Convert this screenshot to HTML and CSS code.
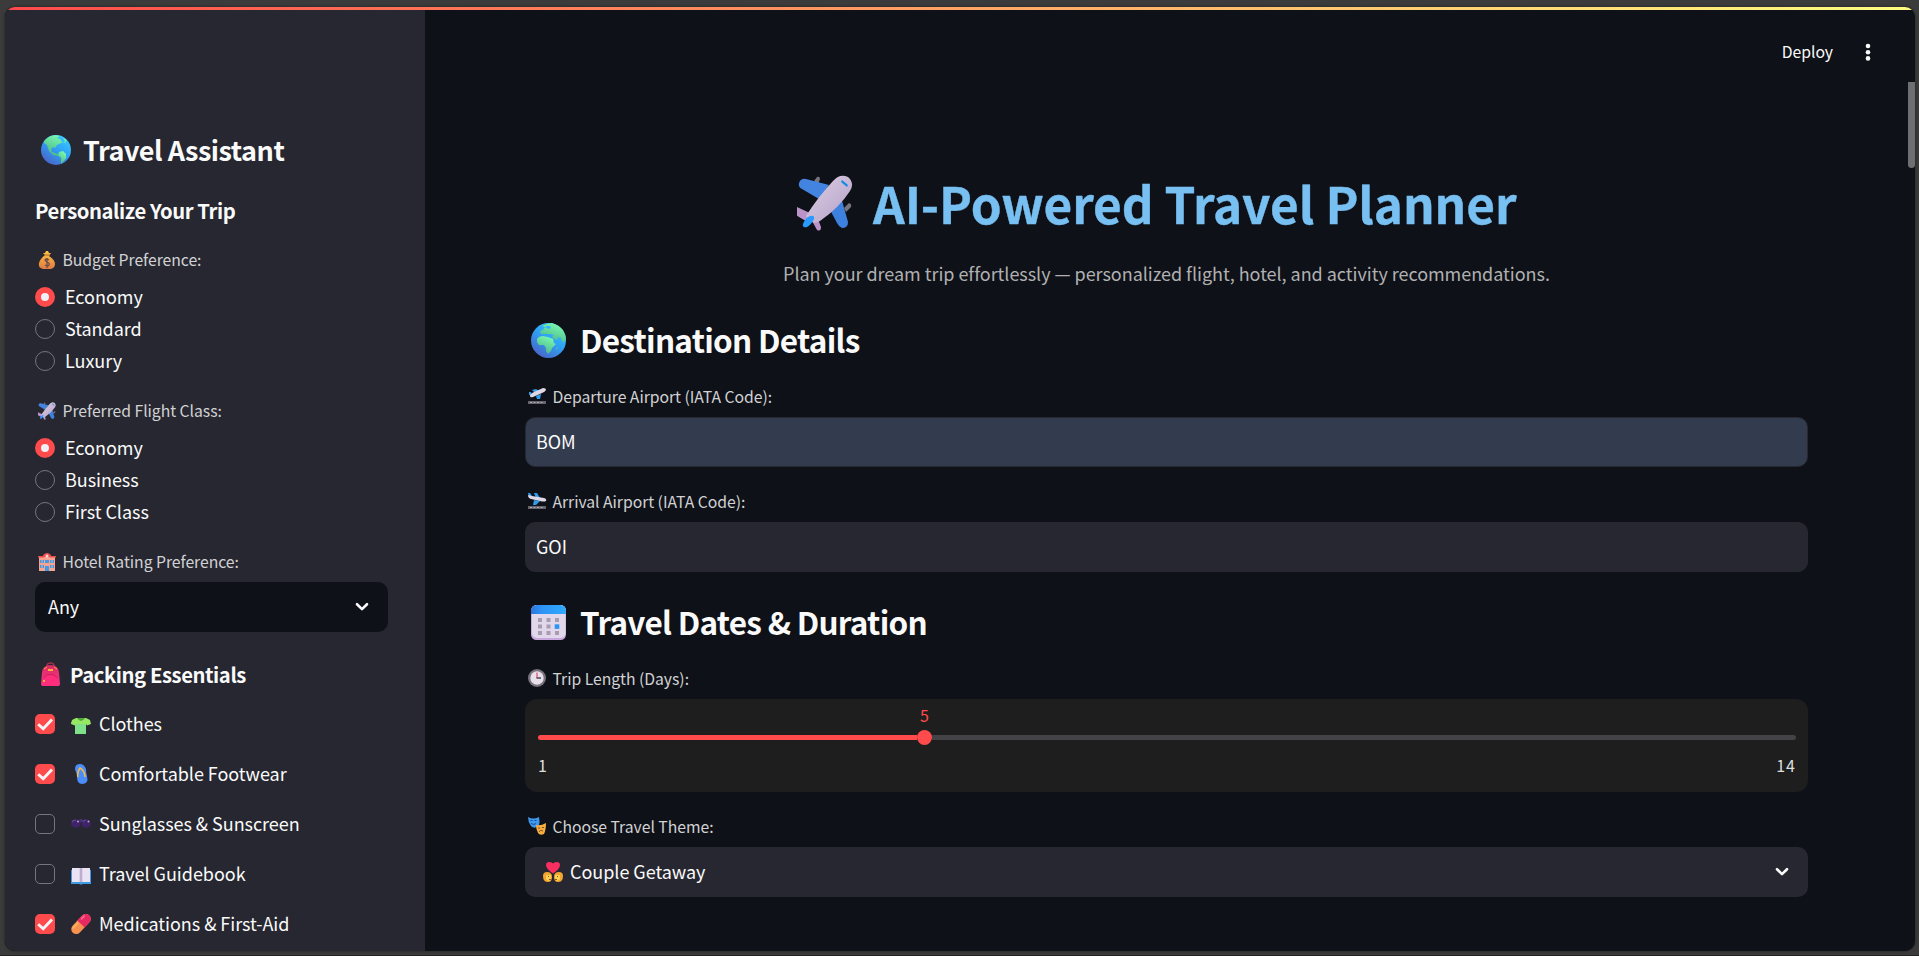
FILE: index.html
```html
<!DOCTYPE html>
<html lang="en">
<head>
<meta charset="utf-8">
<title>Travel Planner</title>
<link rel="stylesheet" href="styles.css">
</head>
<body>
<svg class="defs" aria-hidden="true">
  <defs>
    <linearGradient id="sea" x1="0.8" y1="0.1" x2="0.2" y2="0.95"><stop offset="0" stop-color="#38c4ff"/><stop offset="0.45" stop-color="#30a0f4"/><stop offset="1" stop-color="#4964c8"/></linearGradient>
    <linearGradient id="land" x1="0.8" y1="0" x2="0.3" y2="1"><stop offset="0" stop-color="#7dffb4"/><stop offset="1" stop-color="#4bb386"/></linearGradient>
    <linearGradient id="body" x1="0" y1="0" x2="1" y2="1"><stop offset="0" stop-color="#dcd0e2"/><stop offset="1" stop-color="#b59fc9"/></linearGradient>
    <linearGradient id="gold" x1="0" y1="0" x2="0" y2="1"><stop offset="0" stop-color="#ffc640"/><stop offset="1" stop-color="#e07b45"/></linearGradient>
    <linearGradient id="calTop"><stop offset="0" stop-color="#2e74dd"/><stop offset="0.3" stop-color="#2e93f5"/><stop offset="1" stop-color="#30aaff"/></linearGradient>
    <linearGradient id="pink" x1="0" y1="0" x2="0" y2="1"><stop offset="0" stop-color="#d92e63"/><stop offset="1" stop-color="#ff3187"/></linearGradient>
    <symbol id="plane" viewBox="0 0 56 56">
      <path d="M17 6l3-4q3-1 3 2l-2 5zM47 33l5-5q3 1 2 4l-5 5z" fill="#77747c"/>
      <path d="M2 8Q4 3 9 4L32 10 22 24 5 14Q1 12 2 8z" fill="#4284df"/>
      <path d="M44 22l7 25q0 6-6 6-3-1-5-5L31 31z" fill="#3e80de"/>
      <path d="M15 39L0 32q-6 0-5 4 2 4 14 10zM14 44l6 11q4 2 4-3l-5-13z" fill="#b993c9"/>
      <path d="M9 41Q21 22 36 6 43-2 51 2q7 6 2 14Q42 33 23 46q-8 5-14-5z" fill="url(#body)"/>
      <path d="M6 49q2-6 7-8 5-1 4 3-3 6-7 8-5 1-4-3z" fill="#299aff"/>
      <path d="M45 5l6 5-1 2-6-5z" fill="#168be6"/>
    </symbol>
    <symbol id="check" viewBox="0 0 20 20"><path d="M3.2 10.2l5 4.6L17 5.5" fill="none" stroke="#f4f4f8" stroke-width="2.9"/></symbol>
    <symbol id="chevron" viewBox="0 0 14 10"><path d="M2 2.2l5 4.9 5-4.9" fill="none" stroke="#fafafa" stroke-width="2.6" stroke-linecap="round" stroke-linejoin="round"/></symbol>
  </defs>
</svg>

<div class="window">
  <aside class="sidebar">
    <h1 class="side-title">
      <svg class="i30" viewBox="0 0 30 30"><circle cx="15" cy="15" r="15" fill="url(#sea)"/><path d="M3 6Q8 0 15 0l4 1-3 2 3 1 2 3 4 1-3-5q3 1 4 3l-4 1-6 3-2 3-2-1-2 3 1 2 3 1 4 2-1 1-5-1-4-4-2-6-3-2z" fill="url(#land)"/><path d="M18 17l4-1 3 3 0 4-3 4-2 2 0-6-3-3z" fill="url(#land)"/></svg>
      <span>Travel Assistant</span>
    </h1>
    <h3 class="side-heading personalize">Personalize Your Trip</h3>

    <div class="label side-label">
      <svg class="i18" viewBox="0 0 18 18"><path d="M7 4L5 2l2 0 1-2 2 0 1 2 2 0-2 3q6 4 6 8 0 4-4 5H5q-5-1-4-6 1-4 6-8z" fill="url(#gold)"/><path d="M6 4h6" stroke="#b26a30" stroke-width="1"/><path d="M11 9q-3-2-4 0 0 1 2 2 3 1 2 3-1 2-4 0M9 7v10" stroke="#6b4a46" fill="none" stroke-width="1.3"/></svg>
      <span>Budget Preference:</span>
    </div>
    <div class="radio-row"><i class="radio on"></i><span>Economy</span></div>
    <div class="radio-row"><i class="radio"></i><span>Standard</span></div>
    <div class="radio-row"><i class="radio"></i><span>Luxury</span></div>

    <div class="label side-label next">
      <svg class="i18"><use href="#plane"/></svg>
      <span>Preferred Flight Class:</span>
    </div>
    <div class="radio-row"><i class="radio on"></i><span>Economy</span></div>
    <div class="radio-row"><i class="radio"></i><span>Business</span></div>
    <div class="radio-row"><i class="radio"></i><span>First Class</span></div>

    <div class="label side-label next">
      <svg class="i18" viewBox="0 0 18 18"><path d="M1 4h5V2q3-3 6 0v2h5v14H1z" fill="#f7a392"/><path d="M0 3h6v1.500H0zM12 3h6v1.500h-6zM5 2q4-4 8 0v2H5z" fill="#e84f4d"/><path d="M2 7h1.500v3H2zM4.500 7H6v3H4.500zM12 7h1.500v3H12zM14.500 7H16v3h-1.500zM2 12h1.500v3H2zM4.500 12H6v3H4.500zM12 12h1.500v3H12zM14.500 12H16v3h-1.500zM7 13h4v5H7zM7 7h4v3H7z" fill="#3f9be8"/><path d="M9 1.500v3M7.500 3h3" stroke="#fff"/></svg>
      <span>Hotel Rating Preference:</span>
    </div>
    <div class="select dark"><span>Any</span><svg class="chev"><use href="#chevron"/></svg></div>

    <h3 class="side-heading packing">
      <svg class="pack" viewBox="0 0 19 23"><path d="M6 3q0-3 3.500-3T13 3" fill="none" stroke="#9d3350" stroke-width="1.500"/><path d="M1 9Q2 2 9.500 2T18 9l1 12q0 2-2 2H2q-2 0-2-2z" fill="url(#pink)"/><path d="M3 20q-2-8 6.500-8T16 20v3H3z" fill="#ff2d7c"/><path d="M3 15q2-4 7-3.500 4 0 6 3.500" stroke="#c9205e" fill="none"/><path d="M7 6h5v2H7zM2 17h2v2H2z" fill="#ffb13d"/><path d="M3 6l3-2M16 6l-3-2" stroke="#ff9f3d"/></svg>
      <span>Packing Essentials</span>
    </h3>
    <div class="check-row"><i class="box on"><svg><use href="#check"/></svg></i>
      <svg class="i20" viewBox="0 0 20 20"><path d="M5 5h10v15H4V10H1L0 9l2-3z" fill="#80e08a"/><path d="M5 4h10l4 2 1 4-4 1.500L15 10H5l-1 1.500L0 10l1-4z" fill="#96e763"/><path d="M6 4h8q-4 6-8 0z" fill="#50a63b"/></svg><span>Clothes</span></div>
    <div class="check-row"><i class="box on"><svg><use href="#check"/></svg></i>
      <svg class="i20" viewBox="0 0 20 20"><path d="M4 5q0-5 5-5 4 0 6 5 0 4 1 7 2 8-5 8-5 0-5-7 0-3-1-5-1-2-1-3z" fill="#4a8dfb"/><path d="M7 13Q6 8 9 4q5 3 5 9" fill="none" stroke="#f5b944" stroke-width="1.600"/></svg><span>Comfortable Footwear</span></div>
    <div class="check-row"><i class="box"></i>
      <svg class="i20" viewBox="0 0 20 20"><path d="M8 6q2-2 4 0v2H8z" fill="#4a3474"/><ellipse cx="4.800" cy="9.500" rx="4.800" ry="4.300" fill="#3f2368"/><ellipse cx="15.200" cy="9.500" rx="4.800" ry="4.300" fill="#3f2368"/><path d="M1 8q1-2 4-2M12 8q1-2 3-2" stroke="#674a92" stroke-width="1.200" fill="none"/><circle cx="7" cy="7.500" r="1" fill="#b8a8cc"/><circle cx="17.500" cy="7.500" r="1" fill="#b8a8cc"/></svg><span>Sunglasses &amp; Sunscreen</span></div>
    <div class="check-row"><i class="box"></i>
      <svg class="i20" viewBox="0 0 20 20"><path d="M0 6h20v14h-8l-2 .800L8 20H0z" fill="#3c9ae2"/><path d="M1 4h18v14H1z" fill="#e9e3f3"/><path d="M8.500 4h3v14h-3z" fill="#cfc2df"/><path d="M10 4v15" stroke="#a28fbb" stroke-width=".8"/></svg><span>Travel Guidebook</span></div>
    <div class="check-row"><i class="box on"><svg><use href="#check"/></svg></i>
      <svg class="i20" viewBox="0 0 20 20"><g transform="rotate(-47 10 10)"><rect x="-2" y="5" width="24" height="10" rx="5" fill="#f79150"/><path d="M10 5h7a5 5 0 0 1 0 10h-7z" fill="#e72963"/><path d="M1 7h8" stroke="#ffb768" stroke-width="1.500"/><path d="M14 7h4" stroke="#ff719a" stroke-width="1.500" stroke-linecap="round"/></g></svg><span>Medications &amp; First-Aid</span></div>
  </aside>

  <main class="main">
    <header class="toolbar"><span>Deploy</span><svg class="dots" viewBox="0 0 6 18"><circle cx="3" cy="3" r="2.300"/><circle cx="3" cy="9.200" r="2.300"/><circle cx="3" cy="15.400" r="2.300"/></svg></header>

    <h1 class="title"><svg class="title-plane"><use href="#plane"/></svg><span>AI-Powered Travel Planner</span></h1>
    <p class="subtitle"><span>Plan your dream trip effortlessly — personalized flight, hotel, and activity recommendations.</span></p>

    <h2 class="section first">
      <svg class="i35" viewBox="0 0 35 35"><circle cx="17.500" cy="17.500" r="17.500" fill="url(#sea)"/><path d="M11 3Q16 0 21 0q7 2 11 7 3 5 3 9l-2 3-2 0-1-4-3-1-1 3-3-1-2-2 2-2-4-1-4 0-5 0-1-3 3-1 2-3 3 2 3-1-1-2-3 0-2 1z" fill="url(#land)"/><path d="M6 16q2-3 6-3l5 1 5 2 1 4 2 1-4 4-1 3-3 3-2-3 0-3-2-3-5 0-2-3z" fill="url(#land)"/><path d="M25 25l1.500-1-.500 3z" fill="#5cd0a0"/></svg>
      <span>Destination Details</span>
    </h2>
    <div class="label main-label after-heading">
      <svg class="i18" viewBox="0 0 18 18"><path d="M0 14h18v3H0z" fill="#67646e"/><path d="M2 15.500h14" stroke="#aaa7b0" stroke-dasharray="2 1.500"/><path d="M4 3l4-1 5 3-4 3zM8 9l5-2-1 5-3 0zM1 5h2l1 3-3 0z" fill="#2d9dee"/><path d="M2 9q0-2 4-4l9-4q3 0 3 2-1 2-4 3L5 10q-3 1-3-1z" fill="#ded7e5"/></svg>
      <span>Departure Airport (IATA Code):</span>
    </div>
    <div class="field focus">BOM</div>
    <div class="label main-label">
      <svg class="i18" viewBox="0 0 18 18"><path d="M0 14h18v3H0z" fill="#67646e"/><path d="M2 15.500h14" stroke="#aaa7b0" stroke-dasharray="2 1.500"/><path d="M6 1h3l3 5-4 0zM0 1h2l2 3-3 1zM6 8l6 1-4 4-3 0z" fill="#2d9dee"/><path d="M0 3l4 1 12 2q3 1 2 3-2 1-6 0L3 7Q0 6 0 3z" fill="#ded7e5"/></svg>
      <span>Arrival Airport (IATA Code):</span>
    </div>
    <div class="field">GOI</div>

    <h2 class="section">
      <svg class="i35" viewBox="0 0 35 35"><rect width="35" height="35" rx="5.500" fill="#c9a9dd"/><rect x="1" width="33.500" height="33" rx="5" fill="#e2d8ec"/><path d="M0 9V6q0-6 6-6h23q6 0 6 6v3z" fill="url(#calTop)"/><path d="M7 13h4v4H7zM15.500 13h4v4h-4zM24 13h4v4h-4zM7 19.500h4v4H7zM15.500 19.500h4v4h-4zM7 26h4v4H7zM15.500 26h4v4h-4zM24 26h4v4h-4z" fill="#a79cb0"/><path d="M23.700 19.300h4.600v4.600h-4.600z" fill="#2d96f2"/></svg>
      <span>Travel Dates &amp; Duration</span>
    </h2>
    <div class="label main-label after-heading">
      <svg class="i18" viewBox="0 0 18 18"><circle cx="9" cy="9" r="9" fill="#77727c"/><circle cx="9" cy="9" r="6.700" fill="#e7dfec"/><path d="M9 3.500V9" stroke="#e15a72" stroke-width="1.300"/><path d="M8.500 9H13" stroke="#4b4453" stroke-width="1.500"/></svg>
      <span>Trip Length (Days):</span>
    </div>
    <div class="slider">
      <div class="value-row"><span>5</span></div>
      <div class="track"><div class="fill"></div><div class="thumb"></div><div class="rest"></div></div>
      <div class="range"><span>1</span><span>14</span></div>
    </div>
    <div class="label main-label">
      <svg class="i18" viewBox="0 0 18 18"><path d="M0 0q5 3 11 0 1 5 0 8-4 5-8 1Q0 5 0 0z" fill="#3e99ed"/><path d="M2.500 3.500h2M6.500 3.500h2M3 6.500q3 2 5 0" stroke="#1c4b9b" fill="none"/><path d="M8 8q5 1 10-2 0 7-2 11-4 2-6-1-2-4-2-8z" fill="#f8ad40"/><path d="M10 11h2M14 10.500h2M11 15q1-3 4-1" stroke="#8d4d22" fill="none"/></svg>
      <span>Choose Travel Theme:</span>
    </div>
    <div class="select theme"><svg class="i20" viewBox="0 0 20 20"><path d="M0 14q0-4 4-4 5 0 5 5 0 5-4 5-5 0-5-6zM20 14q0-4-4-4-5 0-5 5 0 5 4 5 5 0 5-6z" fill="#f3a52f"/><path d="M3 13h5v5q-4 2-5-1zM17 13h-5v5q4 2 5-1z" fill="#ffcf50"/><path d="M5 14.500h1M14 14.500h1M6 17.500h2M12 17.500h2" stroke="#8a5526"/><path d="M10 11.500Q3 7 3 3q0-3 3.500-3Q9 0 10 1.500 11 0 13.500 0 17 0 17 3q0 4-7 8.500z" fill="#f92f60"/></svg><span>Couple Getaway</span><svg class="chev"><use href="#chevron"/></svg></div>
    <div class="scrollbar"></div>
  </main>
</div>
</body>
</html>
```
FILE: styles.css
```css
* { box-sizing: border-box; }
body {
  margin: 0;
  height: 956px;
  padding: 7px 4px 5px 5px;
  overflow: hidden;
  background: #3b3b3b;
  border-bottom: 1px solid #232323;
  color: #fafafa;
  font-family: "Noto Sans CJK SC", "Noto Sans CJK JP", "Open Sans", sans-serif;
  font-size: 18px;
  letter-spacing: -0.04px;
}
h1, h2, h3, p { margin: 0; }
svg { display: block; flex: none; overflow: visible; }
span { white-space: nowrap; }
.defs { position: absolute; width: 0; height: 0; }

.window {
  position: relative;
  display: flex;
  width: 1910px;
  height: 944px;
  border-radius: 10px;
  overflow: hidden;
  background: #0e1117;
  box-shadow: 0 0 3px rgba(0, 0, 0, 0.5);
}
.window::before {
  content: "";
  position: absolute;
  inset: 0 0 auto 0;
  height: 3px;
  background: linear-gradient(90deg, #ff4b4b, #fffd80);
}

.i18 { width: 18px; height: 18px; }
.i20 { width: 20px; height: 20px; }
.i30 { width: 30px; height: 30px; }
.i35 { width: 35px; height: 35px; }

.sidebar {
  flex: none;
  width: 420px;
  padding: 123px 37px 0 30px;
  background: #262730;
}
.side-title {
  display: flex;
  align-items: center;
  gap: 12px;
  height: 40px;
  padding-left: 6px;
  font-size: 27px;
  line-height: 40px;
  letter-spacing: -0.48px;
}
.side-heading {
  display: flex;
  align-items: center;
  height: 30px;
  font-size: 20.25px;
  line-height: 30px;
  letter-spacing: -0.43px;
}
.personalize { margin-top: 26px; }
.packing { margin-top: 27px; padding-left: 6px; gap: 10px; }
.packing span { padding-top: 2px; }
.pack { width: 19px; height: 23px; }

.label {
  display: flex;
  align-items: center;
  gap: 6.5px;
  height: 20px;
  margin-bottom: 11px;
  color: #d2d2d4;
  font-size: 15.75px;
  line-height: 20px;
}
.side-label { margin-top: 24px; padding-left: 3px; }
.main-label { margin-top: 24px; padding-left: 3px; }
.main-label span { padding-top: 2px; }
.main-label.after-heading { margin-top: 26px; }

.radio-row {
  display: flex;
  align-items: center;
  gap: 10px;
  height: 32px;
  line-height: 30px;
}
.radio-row span, .check-row span, .select span { padding-bottom: 2px; }
.radio {
  width: 20px;
  height: 20px;
  border: 1px solid #75767c;
  border-radius: 50%;
}
.radio.on { border: 6px solid #ff4b4b; background: #f0f1f6; }

.check-row {
  display: flex;
  align-items: center;
  height: 50px;
  line-height: 30px;
}
.packing + .check-row { margin-top: 10px; }
.check-row .i20 { margin: 0 8px 0 16px; }
.box {
  width: 20px;
  height: 20px;
  border: 1px solid #75767c;
  border-radius: 5px;
}
.box.on { border: 0; background: #ff4b4b; }
.box svg { width: 20px; height: 20px; }

.select {
  display: flex;
  align-items: center;
  height: 50px;
  border-radius: 10px;
  background: #262730;
  line-height: 48px;
}
.select.dark { margin-top: -1px; padding: 0 19px 0 13px; background: #0e1117; }
.select.theme { padding: 0 19px 0 18px; gap: 7px; }
.chev { width: 14px; height: 10px; margin-left: auto; }

.main {
  position: relative;
  flex: 1;
  min-width: 0;
  padding: 3px 107px 0 100px;
}
.toolbar {
  display: flex;
  align-items: center;
  justify-content: flex-end;
  gap: 32px;
  height: 84px;
  margin-right: -63px;
  font-size: 15.75px;
}
.toolbar span { padding-bottom: 1px; }
.dots { width: 6px; height: 18px; fill: #fafafa; }
.title {
  display: flex;
  align-items: center;
  gap: 20px;
  height: 66px;
  margin-top: 76px;
  padding-left: 272px;
  color: #78bff2;
  font-size: 49.5px;
  line-height: 66px;
  letter-spacing: -0.1px;
  -webkit-text-stroke: 0.4px #78bff2;
}
.title-plane { width: 56px; height: 56px; }
.subtitle {
  height: 30px;
  margin-top: 22px;
  color: #b0b0b1;
  font-size: 18px;
  line-height: 30px;
  text-align: center;
}
.section {
  display: flex;
  align-items: center;
  gap: 14px;
  height: 42px;
  margin-top: 28px;
  padding-left: 6px;
  font-size: 31.5px;
  line-height: 42px;
  letter-spacing: -0.72px;
}
.section .i35 { margin-top: 2px; }
.section.first { margin-top: 30px; }

.field {
  height: 50px;
  padding-left: 10px;
  border: 1px solid #262730;
  border-radius: 10px;
  background: #262730;
  line-height: 47px;
}
.field.focus { background: #333b4f; }

.slider {
  height: 93px;
  padding: 6px 12px 0 13px;
  border-radius: 12px;
  background: #1e1e1e;
  font-size: 16px;
}
.value-row {
  display: flex;
  justify-content: center;
  width: 773px;
  height: 22px;
  color: #ff4b4b;
  line-height: 20px;
}
.track { display: flex; align-items: center; height: 21px; }
.fill { width: 379px; height: 5px; border-radius: 3px 0 0 3px; background: #ff4b4b; }
.thumb { width: 15px; height: 15px; border-radius: 50%; background: #ff4b4b; }
.rest { flex: 1; height: 5px; border-radius: 0 3px 3px 0; background: #424247; }
.range {
  display: flex;
  justify-content: space-between;
  margin-top: 6px;
  color: #dededf;
  line-height: 22px;
  letter-spacing: 1px;
}
.scrollbar {
  position: absolute;
  top: 75px;
  right: 0;
  width: 7px;
  height: 86px;
  border-radius: 0 0 4px 4px;
  background: #6e6f73;
}
```
